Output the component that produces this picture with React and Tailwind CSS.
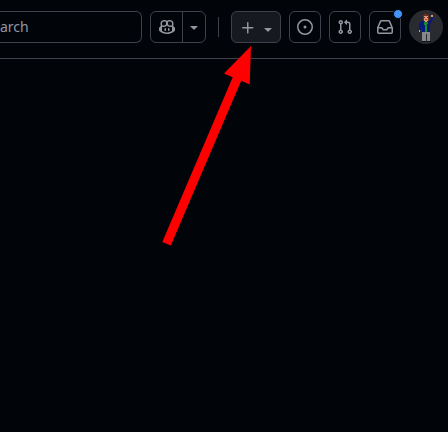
import React from "react";

const ICONS = {
  copilot: [
    "M7.998 15.035c-4.562 0-7.873-2.914-7.998-3.749V9.338c.085-.628.677-1.686 1.588-2.065.013-.07.024-.143.036-.218.029-.183.06-.384.126-.612-.201-.508-.254-1.084-.254-1.656 0-.87.128-1.769.693-2.484.579-.733 1.494-1.124 2.724-1.261 1.206-.134 2.262.034 2.944.765.05.053.096.108.139.165.044-.057.094-.112.143-.165.682-.731 1.738-.899 2.944-.765 1.23.137 2.145.528 2.724 1.261.566.715.693 1.614.693 2.484 0 .572-.053 1.148-.254 1.656.066.228.098.429.126.612.012.076.024.148.037.218.924.385 1.522 1.471 1.591 2.095v1.872c0 .766-3.351 3.795-8.002 3.795Zm0-1.485c2.28 0 4.584-1.11 5.002-1.433V7.862l-.023-.116c-.49.21-1.075.291-1.727.291-1.146 0-2.059-.327-2.71-.991A3.222 3.222 0 0 1 8 6.303a3.24 3.24 0 0 1-.544.743c-.65.664-1.563.991-2.71.991-.652 0-1.236-.081-1.727-.291l-.023.116v4.255c.419.323 2.722 1.433 5.002 1.433ZM6.762 2.83c-.193-.206-.637-.413-1.682-.297-1.019.113-1.479.404-1.713.7-.247.312-.369.789-.369 1.554 0 .793.129 1.171.308 1.371.162.181.519.379 1.442.379.853 0 1.339-.235 1.638-.54.315-.322.527-.827.617-1.553.117-.935-.037-1.395-.241-1.614Zm4.155-.297c-1.044-.116-1.488.091-1.681.297-.204.219-.359.679-.242 1.614.091.726.303 1.231.618 1.553.299.305.784.54 1.638.54.922 0 1.28-.198 1.442-.379.179-.2.308-.578.308-1.371 0-.765-.123-1.242-.37-1.554-.233-.296-.693-.587-1.713-.7Z",
    "M6.25 9.037a.75.75 0 0 1 .75.75v1.501a.75.75 0 0 1-1.5 0V9.787a.75.75 0 0 1 .75-.75Zm4.25.75v1.501a.75.75 0 0 1-1.5 0V9.787a.75.75 0 0 1 1.5 0Z",
  ],
  caret: ["m4.427 7.427 3.396 3.396a.25.25 0 0 0 .354 0l3.396-3.396A.25.25 0 0 0 11.396 7H4.604a.25.25 0 0 0-.177.427Z"],
  plus: ["M7.75 2a.75.75 0 0 1 .75.75V7h4.25a.75.75 0 0 1 0 1.5H8.5v4.25a.75.75 0 0 1-1.5 0V8.5H2.75a.75.75 0 0 1 0-1.5H7V2.75A.75.75 0 0 1 7.75 2Z"],
  issue: ["M8 9.5a1.5 1.5 0 1 0 0-3 1.5 1.5 0 0 0 0 3Z", "M8 0a8 8 0 1 1 0 16A8 8 0 0 1 8 0ZM1.5 8a6.5 6.5 0 1 0 13 0 6.5 6.5 0 0 0-13 0Z"],
  pull: ["M1.5 3.25a2.25 2.25 0 1 1 3 2.122v5.256a2.251 2.251 0 1 1-1.5 0V5.372A2.25 2.25 0 0 1 1.5 3.25Zm5.677-.177L9.573.677A.25.25 0 0 1 10 .854V2.5h1A2.5 2.5 0 0 1 13.5 5v5.628a2.251 2.251 0 1 1-1.5 0V5a1 1 0 0 0-1-1h-1v1.646a.25.25 0 0 1-.427.177L7.177 3.427a.25.25 0 0 1 0-.354ZM3.75 2.5a.75.75 0 1 0 0 1.5.75.75 0 0 0 0-1.5Zm0 9.5a.75.75 0 1 0 0 1.5.75.75 0 0 0 0-1.5Zm8.25.75a.75.75 0 1 0 1.5 0 .75.75 0 0 0-1.5 0Z"],
  inbox: ["M2.8 2.06A1.75 1.75 0 0 1 4.41 1h7.18c.7 0 1.333.417 1.61 1.06l2.74 6.395c.04.093.06.194.06.295v4.5A1.75 1.75 0 0 1 14.25 15H1.75A1.75 1.75 0 0 1 0 13.25v-4.5c0-.101.02-.202.06-.295Zm1.61.44a.25.25 0 0 0-.23.152L1.887 8H4.75a.75.75 0 0 1 .6.3L6.625 10h2.75l1.275-1.7a.75.75 0 0 1 .6-.3h2.863L11.82 2.652a.25.25 0 0 0-.23-.152Zm10.09 7h-2.875l-1.275 1.7a.75.75 0 0 1-.6.3h-3.5a.75.75 0 0 1-.6-.3L4.375 9.5H1.5v3.75c0 .138.112.25.25.25h12.5a.25.25 0 0 0 .25-.25Z"],
};

function Icon({ name, className = "" }) {
  return (
    <svg viewBox="0 0 16 16" className={`size-4 shrink-0 fill-[#9496a1] ${className}`} aria-hidden="true">
      {ICONS[name].map((d) => <path key={d} d={d} />)}
    </svg>
  );
}

function IconButton({ name, label, children }) {
  return (
    <button aria-label={label} className="relative ml-2 flex size-8 shrink-0 items-center justify-center rounded-md border border-[#3e414b]">
      <Icon name={name} />
      {children}
    </button>
  );
}

function Avatar() {
  return (
    <svg viewBox="0 0 34 34" className="ml-2 size-[34px] shrink-0" shapeRendering="crispEdges" role="img" aria-label="Profile">
      <circle cx="17" cy="17" r="17" fill="#292b30" shapeRendering="auto" />
      <path fill="#6f2f1c" d="M15 4h4v1h1v6h-1V7h-4v4h-1V5h1z" />
      <path fill="#dc9a78" d="M15 6h4v5h-1v1h-2v-1h-1zM22 5h2v2h-2zM10 20h1v2h-1z" />
      <path fill="#7d321b" d="M15 7h1v1h-1zM18 7h1v1h-1z" />
      <path fill="#b5382f" d="M16 9h2v1h-2z" />
      <path fill="#06187c" d="M12 11h3v1h4v-1h2v-1h1V7h2v3h-1v2h-1v1h-1v9h-8v-5h-1v3h-2v-7h1v-1h1z" />
      <path fill="#128c25" d="M15 12h4v2h-1v8h-3v-4h1v-3h-1z" />
      <path fill="#06187c" d="M15 17h1v5h-1z" />
      <path fill="#86878a" d="M13 22h8v9h-3v-7h-1v7h-4z" />
      <path fill="#111216" d="M13 31h4v1h-4zM18 31h4v1h-4z" />
    </svg>
  );
}

export default function App() {
  return (
    <div className="relative h-[432px] w-[448px] overflow-hidden bg-[#010409] font-['Noto_Sans',sans-serif]">
      <header className="flex h-[59px] items-start border-b border-[#3e414b] pt-[11px]">
        <div className="flex h-8 w-[142px] shrink-0 items-center rounded-r-md border border-l-0 border-[#3e414b] text-sm leading-5 text-[#9496a1]">
          arch
        </div>
        <div className="ml-2 flex h-8 w-14 shrink-0 rounded-md border border-[#3e414b]">
          <button aria-label="Copilot" className="flex w-8 items-center justify-center border-r border-[#3e414b] pl-px">
            <Icon name="copilot" />
          </button>
          <button aria-label="Copilot options" className="flex flex-1 items-center justify-center">
            <Icon name="caret" />
          </button>
        </div>
        <div className="ml-3 mt-1.5 h-5 w-px shrink-0 bg-[#3e414b]" />
        <button aria-label="Create new" className="ml-3 flex h-8 w-[50px] shrink-0 items-center rounded-md border border-[#3e414b] bg-[#161920] pl-2">
          <Icon name="plus" className="mt-px" />
          <Icon name="caret" className="ml-1 mt-1" />
        </button>
        <IconButton name="issue" label="Issues" />
        <IconButton name="pull" label="Pull requests" />
        <IconButton name="inbox" label="Notifications">
          <span className="absolute -right-[3px] -top-[3px] size-[10px] rounded-full border border-[#010409] bg-[#4493f8]" />
        </IconButton>
        <div className="-mt-px flex"><Avatar /></div>
      </header>
      <svg viewBox="0 0 448 432" className="pointer-events-none absolute inset-0 size-full" aria-hidden="true">
        <path fill="#ff0000" d="M251 46 249.7 84.5 241.2 80.8 170.8 245.6 162.3 242 232.7 77.3 224 73.6Z" />
      </svg>
    </div>
  );
}
